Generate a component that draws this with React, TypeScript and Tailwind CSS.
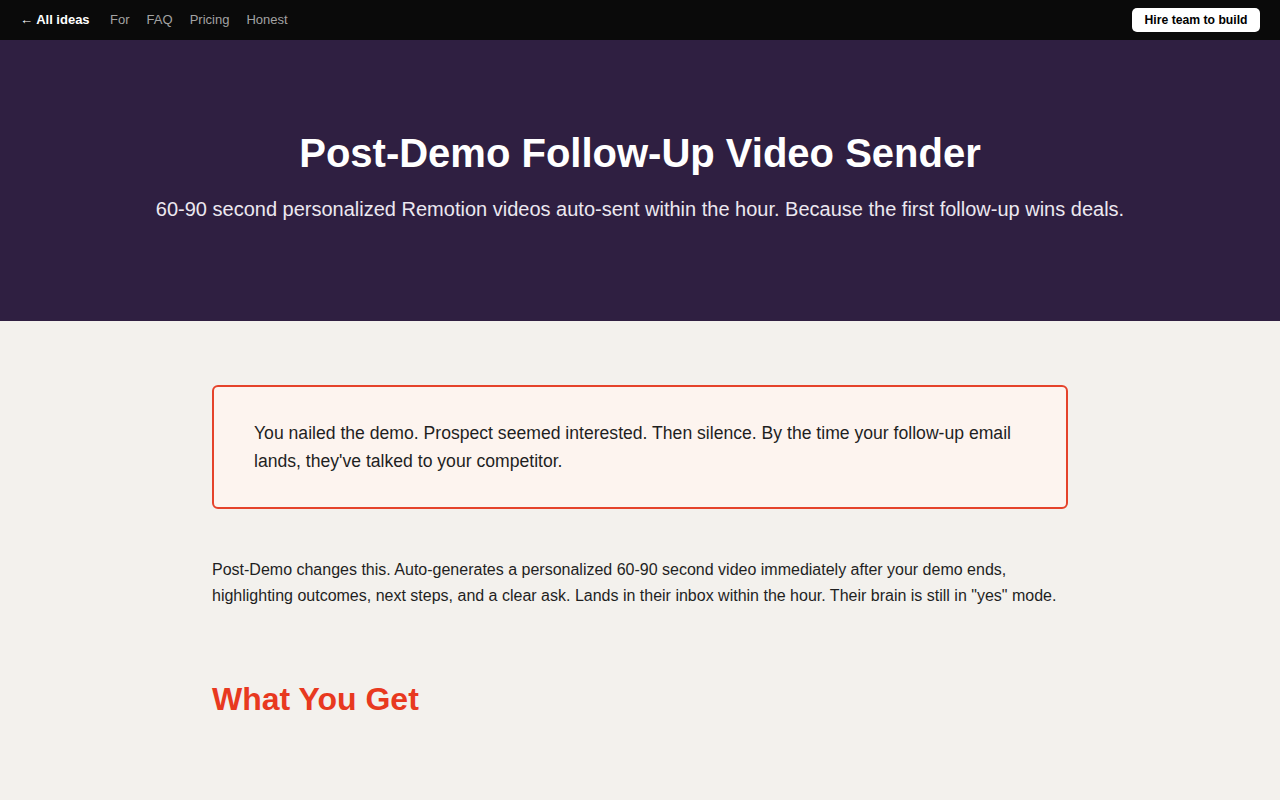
export default function App() {
  return (
    <div className="min-h-[800px] bg-[#f3f1ed]" style={{ fontFamily: '"Liberation Sans", Arial, sans-serif' }}>
      <nav className="h-10 bg-[#0a0a0a] flex items-center justify-between px-5">
        <div className="flex items-center text-[13px]">
          <a className="text-white font-bold mr-[20.5px]">← All ideas</a>
          <a className="text-[#a3a3a3] mr-[17px]">For</a>
          <a className="text-[#a3a3a3] mr-[17px]">FAQ</a>
          <a className="text-[#a3a3a3] mr-[17px]">Pricing</a>
          <a className="text-[#a3a3a3]">Honest</a>
        </div>
        <button className="bg-white text-black text-[12.2px] font-bold rounded-[5px] h-6 px-[12.5px]">Hire team to build</button>
      </nav>
      <header className="bg-[#2f1f41] text-center pt-[89px] pb-[97px]">
        <h1 className="text-white text-[40px] font-bold leading-[48px]">Post-Demo Follow-Up Video Sender</h1>
        <p className="text-[#ece8f0] text-[20px] leading-[30px] mt-[17px]">60-90 second personalized Remotion videos auto-sent within the hour. Because the first follow-up wins deals.</p>
      </header>
      <main className="w-[856px] mx-auto pt-16">
        <div className="border-2 border-[#e5432b] rounded-[6px] bg-[#fdf4ef] px-10 py-8">
          <p className="text-[17.6px] leading-[28px] text-[#1f1f1f]">You nailed the demo. Prospect seemed interested. Then silence. By the time your follow-up email lands, they've talked to your competitor.</p>
        </div>
        <p className="mt-12 text-[16px] leading-[26px] text-[#1f1f1f]">Post-Demo changes this. Auto-generates a personalized 60-90 second video immediately after your demo ends, highlighting outcomes, next steps, and a clear ask. Lands in their inbox within the hour. Their brain is still in "yes" mode.</p>
        <h2 className="mt-[70px] text-[32px] font-bold leading-[40px] text-[#e8391f]">What You Get</h2>
      </main>
    </div>
  );
}
